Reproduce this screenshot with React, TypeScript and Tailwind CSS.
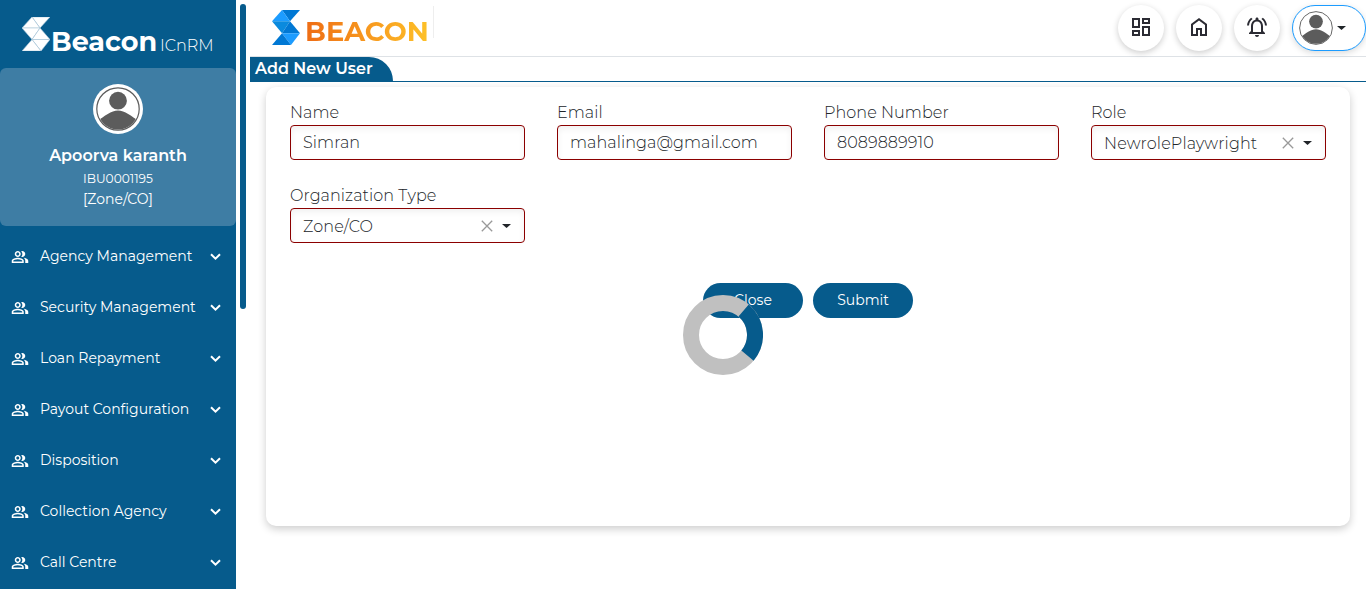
import React from "react";
import { MdOutlinePeopleAlt, MdOutlineDashboard, MdOutlineNotificationsActive } from "react-icons/md";

const MENU = [
  "Agency Management",
  "Security Management",
  "Loan Repayment",
  "Payout Configuration",
  "Disposition",
  "Collection Agency",
  "Call Centre",
];

function Avatar({ size }: { size: number }) {
  return (
    <svg width={size} height={size} viewBox="0 0 44 44" className="block shrink-0">
      <defs>
        <clipPath id={`face${size}`}>
          <circle cx="22" cy="22" r="20.5" />
        </clipPath>
      </defs>
      <circle cx="22" cy="22" r="21.2" fill="#fff" stroke="#5c5c5c" strokeWidth="1.2" />
      <g fill="#5c5c5c" clipPath={`url(#face${size})`}>
        <circle cx="22" cy="13.7" r="8.9" />
        <path d="M0 35C8 29.500 15 23.500 22 23.500s14 6 22 11.500c-3 6-13 10-22 10S3 41 0 35Z" />
      </g>
    </svg>
  );
}

function Ribbon({ fills, line, className }: { fills: string[]; line: string; className: string }) {
  const tris = ["10,0 28,0 18,11", "10,0 18,11 0,11", "0,11 18,11 10,22.500", "18,11 28,22.500 10,22.500", "10,22.500 28,22.500 19,34", "10,22.500 19,34 0,34"];
  return (
    <svg viewBox="0 0 28 34" preserveAspectRatio="none" className={className}>
      {tris.map((p, i) => (
        <polygon key={p} points={p} fill={fills[i]} stroke={line} strokeWidth="0.6" />
      ))}
    </svg>
  );
}

function Caret() {
  return (
    <svg width="9" height="4" viewBox="0 0 9 4" className="block">
      <path d="M0 0h9L4.500 4Z" fill="#212529" />
    </svg>
  );
}

function Field({ label, value, select }: { label: string; value: string; select?: boolean }) {
  return (
    <div>
      <div className="h-[25px] pt-px text-[16px] leading-[24px] font-light tracking-[0.07px] whitespace-nowrap text-[#212529]">{label}</div>
      <div className="flex h-[35px] items-center rounded-[4px] border border-[#8b0000] bg-white pl-3 shadow-[inset_0_3px_6px_rgba(0,0,0,0.06)]">
        <span className={`flex-1 text-[16px] leading-6 font-light whitespace-nowrap text-[#212529] ${select ? "pt-[2px] tracking-[0.13px]" : "tracking-[0.07px]"}`}>{value}</span>
        {select && (
          <div className="flex items-center gap-[9px] pr-[13px]">
            <svg width="12" height="12" viewBox="0 0 12 12">
              <path d="M.8.8l10.400 10.400M11.200.8L.8 11.200" stroke="#999" strokeWidth="1.300" />
            </svg>
            <Caret />
          </div>
        )}
      </div>
    </div>
  );
}

function RoundButton({ children }: { children: React.ReactNode }) {
  return <div className="flex h-[46px] w-[46px] items-center justify-center rounded-full bg-white pb-[2px] text-[#2b2b33] shadow-[0_2px_6px_rgba(0,0,0,0.2)]">{children}</div>;
}

function Sidebar() {
  return (
    <aside className="h-full w-[236px] shrink-0 overflow-hidden bg-[#065b8c] text-white">
      <div className="flex h-[68px] pt-[17px] pl-[22px]">
        <Ribbon fills={["#fff", "#fff", "#fff", "#fff", "#fff", "#fff"]} line="#a9c6d8" className="h-[34px] w-[28px]" />
        <span className="ml-px w-[109px] pt-[8px] text-[27px] leading-[34px] font-bold">Beacon</span>
        <span className="pt-[13px] text-[16px] leading-[32px] font-light">ICnRM</span>
      </div>
      <div className="flex h-[158px] flex-col items-center rounded-[6px] bg-[#3e7da4] pt-4">
        <div className="flex h-[50px] w-[50px] items-center justify-center rounded-full bg-white">
          <Avatar size={44} />
        </div>
        <div className="mt-[10px] h-6 text-[16px] leading-6 font-semibold">Apoorva karanth</div>
        <div className="h-5 text-[12.2px] leading-[21px]">IBU0001195</div>
        <div className="h-5 text-[14px] leading-[23px]">[Zone/CO]</div>
      </div>
      <nav className="pt-[5px]">
        {MENU.map((label) => (
          <div key={label} className="flex h-[51px] items-center pl-[11px]">
            <MdOutlinePeopleAlt size={18} className="w-[18px]" />
            <span className="ml-[11px] w-[170px] text-[14px] leading-[21px] whitespace-nowrap">{label}</span>
            <svg width="11" height="8" viewBox="0 0 11 8" fill="none" stroke="#fff" strokeWidth="2">
              <path d="M1 1.200l4.500 4.500L10 1.200" />
            </svg>
          </div>
        ))}
      </nav>
    </aside>
  );
}

export default function App() {
  return (
    <div className="relative flex h-[589px] w-[1366px] overflow-hidden bg-white font-['Montserrat',Inter,sans-serif]">
      <Sidebar />
      <div className="mt-[4px] ml-[4px] h-[305px] w-[6px] shrink-0 rounded-full bg-[#065b8c]" />
      <main className="ml-[4px] w-[1116px]">
        <header className="flex h-[57px] border-b border-[#dee2e6]">
          <div className="flex w-[183px] pt-[10px] pl-[22px]">
            <Ribbon fills={["#0078d4", "#1c9cff", "#0a8ade", "#0078d4", "#1c9cff", "#0078d4"]} line="none" className="h-[35px] w-[28px]" />
            <span className="ml-[5px] h-[36px] bg-gradient-to-r from-[#ee6c15] to-[#fdc128] bg-clip-text pt-[4px] text-[27.3px] leading-[36px] font-bold text-transparent">BEACON</span>
          </div>
          <div className="mt-[6px] h-8 w-px bg-[#eee]" />
          <div className="ml-auto flex gap-3 pt-[5px]">
            <RoundButton><MdOutlineDashboard size={24} /></RoundButton>
            <RoundButton>
              <svg width="24" height="24" viewBox="0 -960 960 960" fill="currentColor">
                <path d="M240-200h120v-240h240v240h120v-360L480-740 240-560v360Zm-80 80v-480l320-240 320 240v480H520v-240h-80v240H160Z" />
              </svg>
            </RoundButton>
            <RoundButton><MdOutlineNotificationsActive size={24} /></RoundButton>
            <div className="flex h-[46px] w-[74px] items-center rounded-full border border-[#1c9cff] bg-white pl-[6px] shadow-[0_2px_6px_rgba(0,0,0,0.15)]">
              <Avatar size={34} />
              <div className="ml-[4px]"><Caret /></div>
            </div>
          </div>
        </header>
        <div className="h-[25px] border-b border-[#065b8c]">
          <div className="h-[24px] w-[143px] rounded-tr-[24px] bg-[#065b8c] pl-[5px] text-[16px] leading-[23px] font-semibold text-white">Add New User</div>
        </div>
        <section className="mt-[5px] ml-4 h-[439px] w-[1084px] rounded-[10px] bg-white px-6 pt-[13px] shadow-[0_3px_8px_rgba(0,0,0,0.2)]">
          <div className="grid grid-cols-[235px_235px_235px_235px] gap-x-8 gap-y-[23px]">
            <Field label="Name" value="Simran" />
            <Field label="Email" value="mahalinga@gmail.com" />
            <Field label="Phone Number" value="8089889910" />
            <Field label="Role" value="NewrolePlaywright" select />
            <Field label="Organization Type" value="Zone/CO" select />
          </div>
          <div className="mt-10 flex justify-center gap-[10px]">
            <button className="h-[35px] w-[100px] rounded-full bg-[#065b8c] text-[14px] leading-[35px] text-white">Close</button>
            <button className="h-[35px] w-[100px] rounded-full bg-[#065b8c] text-[14px] leading-[35px] text-white">Submit</button>
          </div>
        </section>
      </main>
      <svg width="80" height="80" viewBox="0 0 80 80" className="absolute top-[295px] left-[683px]" fill="none" strokeWidth="16">
        <circle cx="40" cy="40" r="32" stroke="#c0c0c0" />
        <path d="M60.600 15.500A32 32 0 0 1 64.500 60.600" stroke="#065b8c" />
      </svg>
    </div>
  );
}
